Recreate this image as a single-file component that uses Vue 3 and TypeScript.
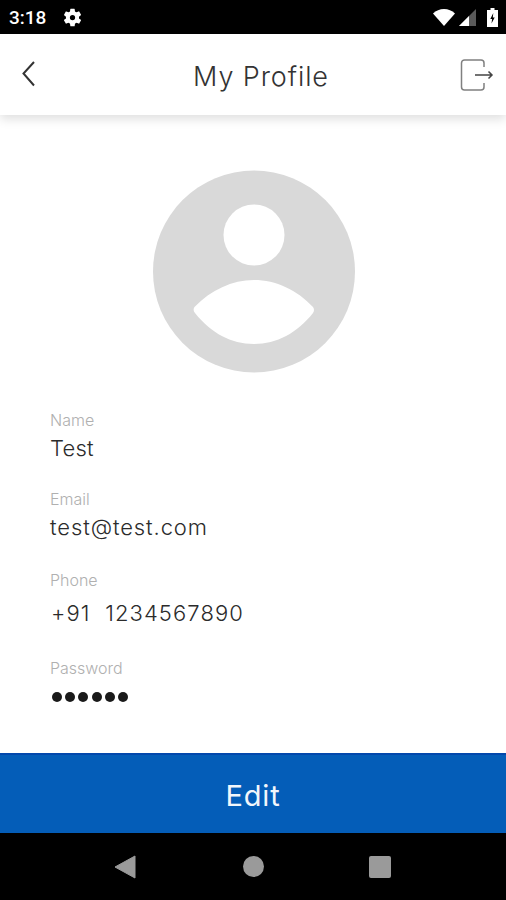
<script setup lang="ts">
const fields = [
  { label: 'Name', value: 'Test', cls: 'f-name' },
  { label: 'Email', value: 'test@test.com', cls: 'f-email' },
  { label: 'Phone', value: '+91  1234567890', cls: 'f-phone' },
]
</script>

<template>
  <div class="page">
    <div class="status">
      <span class="time">3:18</span>
      <svg class="gear" width="21" height="21" viewBox="0 0 24 24">
        <path fill="#fff" fill-rule="evenodd" d="M19.4 13c.04-.33.06-.66.06-1s-.02-.67-.06-1l2.1-1.65c.2-.15.25-.42.13-.64l-2-3.46c-.12-.22-.39-.3-.61-.22l-2.49 1c-.52-.4-1.08-.73-1.69-.98l-.38-2.65A.49.49 0 0 0 14 2h-4a.49.49 0 0 0-.49.42l-.38 2.65c-.61.25-1.17.59-1.69.98l-2.49-1a.5.5 0 0 0-.61.22l-2 3.46c-.13.22-.07.49.12.64L4.57 11c-.04.33-.07.67-.07 1s.03.67.07 1l-2.11 1.65c-.19.15-.25.42-.12.64l2 3.46c.12.22.39.3.61.22l2.49-1c.52.4 1.08.73 1.69.98l.38 2.65c.03.24.24.42.49.42h4c.25 0 .46-.18.49-.42l.38-2.65c.61-.25 1.17-.59 1.69-.98l2.49 1c.22.08.49 0 .61-.22l2-3.46c.12-.22.07-.49-.13-.64L19.4 13zM12 15a3 3 0 1 1 0-6 3 3 0 0 1 0 6z" />
      </svg>
      <span class="spacer"></span>
      <svg class="wifi" width="22" height="17" viewBox="0 0 22 17">
        <path fill="#fff" d="M0 4.500C3 1.700 6.800 0 11 0s8 1.700 11 4.500L11 17z" />
      </svg>
      <svg class="signal" width="17" height="17" viewBox="0 0 17 17">
        <path fill="#5a5a5a" d="M17 0v17H0z" />
        <path fill="#fff" d="M10 7v10H0z" />
      </svg>
      <svg class="battery" width="11" height="19" viewBox="0 0 11 19">
        <path fill="#fff" d="M3.500 0h4v2H11v17H0V2h3.500z" />
        <path fill="#000" d="M6.300 5 3.300 11h1.800L4.500 15.500 7.700 9.500H5.800z" />
      </svg>
    </div>

    <header class="bar">
      <svg class="back" width="18" height="28" viewBox="0 0 18 28">
        <path d="M14 2 3.500 13.500 14 25.500" fill="none" stroke="#333" stroke-width="2" />
      </svg>
      <h1 class="title">My Profile</h1>
      <svg class="logout" width="34" height="34" viewBox="0 0 34 34">
        <path d="M24 9V5A3 3 0 0 0 21 2H4.500a3 3 0 0 0-3 3v24a3 3 0 0 0 3 3H21a3 3 0 0 0 3-3V25" fill="none" stroke="#808080" stroke-width="1.500" />
        <path d="M15 17h17M28.500 13.500l3.500 3.500-3.500 3.500" fill="none" stroke="#444" stroke-width="1.500" />
      </svg>
    </header>

    <main class="content">
      <div class="avatar">
        <svg width="202" height="203" viewBox="0 0 202 203">
          <circle cx="101" cy="101.500" r="101" fill="#d9d9d9" />
          <circle cx="101" cy="65" r="30.500" fill="#fff" />
          <path d="M41.500 137C58 120 79 110 101 110S144 120 160 137Q162 140 160 143C144 163 124 174 101 174S58 163 42 143Q39.500 140 41.500 137z" fill="#fff" />
        </svg>
      </div>
      <div class="fields">
        <div v-for="f in fields" :key="f.label" class="field" :class="f.cls">
          <div class="label">{{ f.label }}</div>
          <div class="value">{{ f.value }}</div>
        </div>
        <div class="field f-pass">
          <div class="label">Password</div>
          <div class="dots">
            <span v-for="n in 6" :key="n" class="dot"></span>
          </div>
        </div>
      </div>
    </main>

    <button class="edit">Edit</button>

    <nav class="nav">
      <svg class="nav-back" width="22" height="24" viewBox="0 0 22 24"><path d="M21 1v22L1 12z" fill="#9a9a9a" stroke="#9a9a9a" stroke-linejoin="round" /></svg>
      <svg width="21" height="21" viewBox="0 0 21 21"><circle cx="10.500" cy="10.500" r="10.500" fill="#9a9a9a" /></svg>
      <svg width="22" height="22" viewBox="0 0 22 22"><rect width="22" height="22" rx="2" fill="#9a9a9a" /></svg>
    </nav>
  </div>
</template>

<style>
html,
body {
  margin: 0;
  background: #fff;
}
</style>

<style scoped>
.page {
  width: 506px;
  height: 900px;
  display: flex;
  flex-direction: column;
  overflow: hidden;
  font-family: Inter, 'Open Sans', sans-serif;
  color: #2b2b2b;
}
.status {
  height: 34px;
  flex: none;
  background: #000;
  display: flex;
  align-items: center;
  padding: 0 8px 0 9px;
  box-sizing: border-box;
  color: #fff;
}
.time {
  font-family: Roboto, sans-serif;
  font-size: 19px;
  font-weight: 500;
}
.gear {
  margin-left: 16px;
}
.spacer {
  flex: 1;
}
.signal {
  margin-left: 4px;
}
.battery {
  margin-left: 11px;
}
.bar {
  height: 81px;
  flex: none;
  display: flex;
  align-items: center;
  justify-content: space-between;
  padding: 0 12px 0 20px;
  box-sizing: border-box;
  background: #fff;
  box-shadow: 0 4px 10px rgba(0, 0, 0, 0.13);
  position: relative;
}
.back {
  margin-top: -1px;
}
.title {
  margin: 3px 0 0 24px;
  font-size: 27px;
  font-weight: 300;
  letter-spacing: 0.9px;
  color: #333;
}
.logout {
  margin-top: 0;
}
.content {
  flex: 1;
  padding-top: 55px;
}
.avatar {
  display: flex;
  justify-content: center;
  margin-left: 2px;
}
.avatar svg {
  display: block;
}
.fields {
  padding: 37px 0 0 50px;
}
.label {
  font-size: 16px;
  line-height: 20px;
  font-weight: 300;
  color: #b0b0b0;
}
.value {
  font-size: 22px;
  line-height: 28px;
  font-weight: 300;
  color: #2b2b2b;
  letter-spacing: 0.9px;
  white-space: pre;
}
.f-name .value {
  margin-top: 4px;
  letter-spacing: 0.2px;
}
.f-email {
  margin-top: 27px;
}
.f-email .value {
  margin-top: 4px;
}
.f-phone {
  margin-top: 29px;
}
.f-phone .value {
  margin-top: 9px;
  margin-left: 1px;
  letter-spacing: 1.1px;
}
.f-pass {
  margin-top: 31px;
}
.dots {
  display: flex;
  gap: 3.200px;
  margin: 14px 0 0 2px;
}
.dot {
  width: 10px;
  height: 10px;
  border-radius: 50%;
  background: #1a1a1a;
}
.edit {
  height: 80px;
  flex: none;
  border: 0;
  border-top: 2px solid #0348ac;
  background: #045db8;
  color: #f2f6fb;
  font-family: Inter, sans-serif;
  font-size: 29px;
  font-weight: 400;
  letter-spacing: 0.8px;
  padding: 3px 0 0;
}
.nav {
  height: 67px;
  flex: none;
  background: #000;
  display: flex;
  align-items: center;
  gap: 105px;
  padding-left: 114px;
  box-sizing: border-box;
}
.nav-back {
  margin-right: 2px;
}
</style>
